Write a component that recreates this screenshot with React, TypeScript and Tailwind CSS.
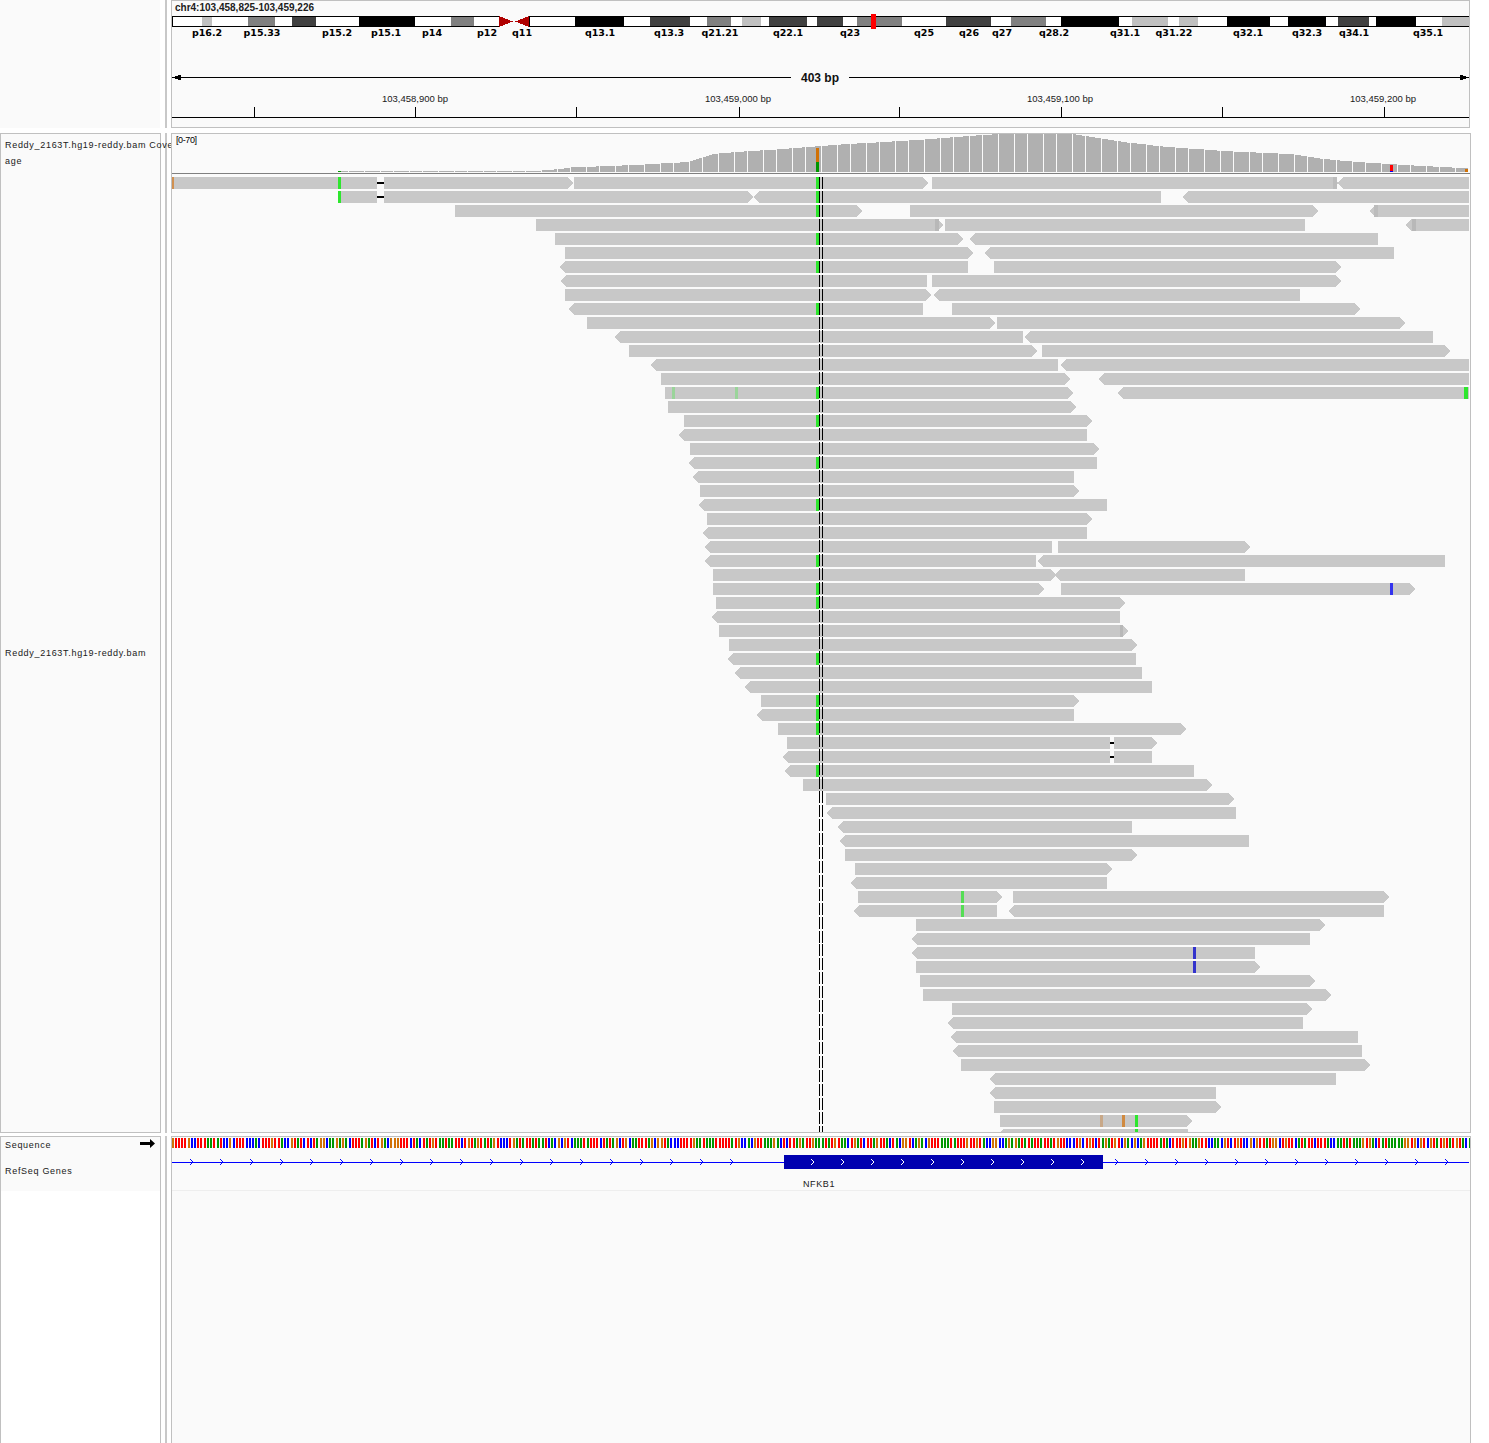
import React from 'react';

type Dir = 'r' | 'l' | 'n';
type Read = [number, number, Dir];

const GREEN = '#2ee62e';
const SCALE = 1297 / 403;

const bands: [number, number, string][] = [
  [172, 202, '#fff'], [202, 212, '#c0c0c0'], [212, 248, '#fff'], [248, 275, '#808080'], [275, 292, '#fff'],
  [292, 316, '#404040'], [316, 359, '#fff'], [359, 415, '#000'], [415, 451, '#fff'], [451, 474, '#808080'],
  [474, 499, '#fff'], [529, 575, '#fff'], [575, 624, '#000'], [624, 650, '#fff'], [650, 690, '#404040'],
  [690, 707, '#fff'], [707, 731, '#808080'], [731, 742, '#fff'], [742, 761, '#c0c0c0'], [761, 769, '#fff'],
  [769, 807, '#404040'], [807, 817, '#fff'], [817, 843, '#404040'], [843, 857, '#fff'], [857, 902, '#808080'],
  [902, 946, '#fff'], [946, 991, '#404040'], [991, 1011, '#fff'], [1011, 1046, '#808080'], [1046, 1061, '#fff'],
  [1061, 1119, '#000'], [1119, 1132, '#fff'], [1132, 1168, '#c0c0c0'], [1168, 1179, '#fff'], [1179, 1198, '#c0c0c0'],
  [1198, 1227, '#fff'], [1227, 1270, '#000'], [1270, 1288, '#fff'], [1288, 1326, '#000'], [1326, 1338, '#fff'],
  [1338, 1369, '#404040'], [1369, 1376, '#fff'], [1376, 1416, '#000'], [1416, 1442, '#fff'], [1442, 1469, '#c0c0c0'],
];

const cytoLabels: [string, number][] = [
  ['p16.2', 207], ['p15.33', 262], ['p15.2', 337], ['p15.1', 386], ['p14', 432], ['p12', 487], ['q11', 522],
  ['q13.1', 600], ['q13.3', 669], ['q21.21', 720], ['q22.1', 788], ['q23', 850], ['q25', 924], ['q26', 969],
  ['q27', 1002], ['q28.2', 1054], ['q31.1', 1125], ['q31.22', 1174], ['q32.1', 1248], ['q32.3', 1307],
  ['q34.1', 1354], ['q35.1', 1428],
];

const rulerLabels: [string, number][] = [
  ['103,458,900 bp', 415], ['103,459,000 bp', 738], ['103,459,100 bp', 1060], ['103,459,200 bp', 1383],
];
const ticks = [254, 415, 576, 739, 899, 1061, 1222, 1384];

// one entry per row of the pileup, top to bottom
const rows: Read[][] = [
  [[172, 377, 'n'], [384, 573, 'r'], [574, 928, 'r'], [932, 1338, 'r'], [1338, 1469, 'l']],
  [[338, 377, 'n'], [384, 753, 'r'], [754, 1161, 'l'], [1183, 1469, 'l']],
  [[455, 862, 'r'], [910, 1318, 'r'], [1370, 1469, 'l']],
  [[536, 943, 'r'], [945, 1305, 'n'], [1406, 1469, 'l']],
  [[555, 963, 'r'], [970, 1378, 'l']],
  [[565, 973, 'r'], [985, 1394, 'l']],
  [[560, 968, 'l'], [994, 1341, 'r']],
  [[561, 927, 'l'], [932, 1341, 'r']],
  [[565, 931, 'r'], [934, 1300, 'l']],
  [[569, 923, 'l'], [952, 1360, 'r']],
  [[587, 995, 'r'], [997, 1405, 'r']],
  [[615, 1023, 'l'], [1025, 1433, 'l']],
  [[629, 1037, 'r'], [1042, 1450, 'r']],
  [[651, 1058, 'l'], [1061, 1469, 'l']],
  [[661, 1070, 'r'], [1099, 1469, 'l']],
  [[665, 1073, 'r'], [1118, 1469, 'l']],
  [[668, 1076, 'r']],
  [[684, 1092, 'r']],
  [[679, 1087, 'l']],
  [[690, 1099, 'r']],
  [[689, 1097, 'l']],
  [[693, 1074, 'l']],
  [[700, 1079, 'r']],
  [[699, 1107, 'l']],
  [[707, 1092, 'r']],
  [[703, 1087, 'l']],
  [[705, 1052, 'l'], [1058, 1250, 'r']],
  [[705, 1036, 'l'], [1038, 1445, 'l']],
  [[713, 1056, 'r'], [1055, 1245, 'l']],
  [[713, 1044, 'r'], [1061, 1415, 'r']],
  [[716, 1125, 'r']],
  [[712, 1120, 'l']],
  [[719, 1128, 'r']],
  [[729, 1137, 'r']],
  [[728, 1136, 'l']],
  [[735, 1142, 'l']],
  [[745, 1152, 'l']],
  [[761, 1079, 'r']],
  [[757, 1074, 'l']],
  [[778, 1186, 'r']],
  [[787, 1110, 'n'], [1114, 1157, 'r']],
  [[783, 1110, 'l'], [1114, 1152, 'n']],
  [[785, 1194, 'l']],
  [[803, 1212, 'r']],
  [[826, 1234, 'r']],
  [[827, 1236, 'l']],
  [[838, 1132, 'l']],
  [[840, 1249, 'l']],
  [[845, 1137, 'r']],
  [[855, 1112, 'r']],
  [[851, 1107, 'l']],
  [[858, 1002, 'r'], [1013, 1389, 'r']],
  [[854, 997, 'l'], [1009, 1384, 'l']],
  [[916, 1325, 'r']],
  [[912, 1310, 'l']],
  [[912, 1255, 'l']],
  [[916, 1260, 'r']],
  [[920, 1315, 'r']],
  [[923, 1331, 'r']],
  [[952, 1312, 'r']],
  [[948, 1303, 'l']],
  [[951, 1358, 'l']],
  [[953, 1362, 'l']],
  [[961, 1370, 'r']],
  [[990, 1336, 'l']],
  [[990, 1216, 'l']],
  [[994, 1221, 'r']],
  [[1000, 1192, 'r']],
  [[998, 1188, 'l']],
];

const greenRows = [0, 1, 2, 4, 6, 9, 15, 17, 20, 23, 27, 29, 30, 34, 37, 38, 39, 42];

// row, x, width, colour
const marks: [number, number, number, string][] = [
  [0, 172, 2, '#d09050'],
  [0, 338, 3, GREEN],
  [1, 338, 3, GREEN],
  [0, 1333, 4, '#bcbcbc'],
  [2, 1374, 4, '#bcbcbc'],
  [3, 935, 4, '#b8b8b8'],
  [3, 1412, 4, '#b8b8b8'],
  [15, 672, 3, '#9ad49a'],
  [15, 735, 3, '#9ad49a'],
  [15, 1464, 4, GREEN],
  [29, 1390, 3, '#3333ee'],
  [32, 1120, 3, '#b8b8b8'],
  [51, 961, 3, '#55dd55'],
  [52, 961, 3, '#55dd55'],
  [55, 1193, 3, '#3333cc'],
  [56, 1193, 3, '#3333cc'],
  [67, 1100, 3, '#c8a888'],
  [67, 1122, 3, '#d08a40'],
  [67, 1135, 3, GREEN],
  [68, 1135, 3, GREEN],
];

const profile: [number, number][] = [
  [338, 171.4], [535, 171], [560, 169], [567, 167.5], [633, 165], [687, 162], [700, 158], [713, 154], [733, 152],
  [767, 150], [800, 147.5], [847, 144], [917, 140], [967, 136], [1000, 134], [1072, 133.5], [1078, 135], [1089, 137],
  [1122, 142], [1156, 146], [1222, 151], [1289, 154], [1322, 159], [1356, 162], [1422, 166], [1470, 168.5],
];

function coverageTop(x: number) {
  for (let i = 1; i < profile.length; i++) {
    const [x0, y0] = profile[i - 1];
    const [x1, y1] = profile[i];
    if (x <= x1) return y0 + ((x - x0) / (x1 - x0)) * (y1 - y0);
  }
  return 168;
}

const basePx = (i: number) => 172 + Math.floor(i * SCALE);

const baseColors = ['#009600', '#0000ff', '#d17105', '#ff0000'];
const bases: string[] = [];
let seed = 20231;
for (let i = 0; i < 404; i++) {
  seed = (seed * 1103515245 + 12345) % 2147483648;
  const r = (seed >> 12) % 100;
  bases.push(r < 29 ? baseColors[0] : r < 47 ? baseColors[1] : r < 66 ? baseColors[2] : baseColors[3]);
}

const step = (from: number, to: number) => {
  const out: number[] = [];
  for (let x = from; x <= to; x += 30) out.push(x);
  return out;
};

function readPoints([x1, x2, dir]: Read, y: number) {
  const b = y + 12;
  const m = y + 6;
  if (dir === 'r') return `${x1},${y} ${x2 - 5},${y} ${x2},${m} ${x2 - 5},${b} ${x1},${b}`;
  if (dir === 'l') return `${x1 + 5},${y} ${x2},${y} ${x2},${b} ${x1 + 5},${b} ${x1},${m}`;
  return `${x1},${y} ${x2},${y} ${x2},${b} ${x1},${b}`;
}

const rowY = (i: number) => 177 + 14 * i;

function HeaderTrack() {
  const label = { fontFamily: '"DejaVu Sans", sans-serif', fontSize: 9.5, fontWeight: 700 };
  return (
    <svg width={1298} height={126} viewBox="172 1 1298 126" className="block" shapeRendering="crispEdges">
      <text x={175} y={11} fontFamily='"Liberation Sans", sans-serif' fontSize={10} fontWeight={700} fill="#202020">
        chr4:103,458,825-103,459,226
      </text>
      {bands.map(([a, b, c]) => (
        <rect key={a} x={a} y={16} width={b - a} height={11} fill={c} />
      ))}
      <rect x={172} y={16} width={327} height={1} fill="#000" />
      <rect x={172} y={26} width={327} height={1} fill="#000" />
      <rect x={529} y={16} width={940} height={1} fill="#000" />
      <rect x={529} y={26} width={940} height={1} fill="#000" />
      <rect x={172} y={16} width={1} height={11} fill="#000" />
      <rect x={529} y={16} width={1} height={11} fill="#000" />
      <polygon points="499,16 513,21.5 499,27" fill="#b00000" />
      <polygon points="529,16 515,21.5 529,27" fill="#b00000" />
      <rect x={871} y={14} width={5} height={15} fill="#ff0000" />
      {cytoLabels.map(([t, x]) => (
        <text key={t} x={x} y={36} textAnchor="middle" fill="#000" style={label} shapeRendering="auto">
          {t}
        </text>
      ))}
      <rect x={172} y={77} width={619} height={1} fill="#000" />
      <rect x={849} y={77} width={620} height={1} fill="#000" />
      <polygon points="172,77.5 181,74.5 181,80.5" fill="#000" />
      <polygon points="1469,77.5 1460,74.5 1460,80.5" fill="#000" />
      <text x={820} y={82} textAnchor="middle" fontFamily='"Liberation Sans", sans-serif' fontSize={12} fontWeight={700} fill="#101010">
        403 bp
      </text>
      {rulerLabels.map(([t, x]) => (
        <text key={t} x={x} y={102} textAnchor="middle" fontFamily='"Liberation Sans", sans-serif' fontSize={9.5} fill="#202020">
          {t}
        </text>
      ))}
      {ticks.map((x) => (
        <rect key={x} x={x} y={107} width={1} height={10} fill="#000" />
      ))}
      <rect x={172} y={117} width={1297} height={1} fill="#000" />
    </svg>
  );
}

function Pileup() {
  const bars = [];
  for (let i = 0; i < 403; i++) {
    const x = basePx(i);
    if (x < 338 || x > 1467) continue;
    const top = Math.round(coverageTop(x));
    bars.push(<rect key={i} x={x} y={top} width={3} height={172 - top} fill="#b0b0b0" />);
  }
  return (
    <svg width={1298} height={998} viewBox="172 134 1298 998" className="block" shapeRendering="crispEdges">
      {bars}
      <rect x={816} y={148} width={3} height={14} fill="#d17105" />
      <rect x={816} y={162} width={3} height={10} fill="#009600" />
      <rect x={338} y={171} width={3} height={1} fill="#009600" />
      <rect x={1390} y={165} width={3} height={6} fill="#ff0000" />
      <rect x={1390} y={171} width={3} height={1} fill="#0000ff" />
      <rect x={1465} y={169} width={3} height={3} fill="#d17105" />
      <rect x={172} y={173} width={1298} height={1} fill="#808080" />
      <text x={176} y={143} fontFamily='"Liberation Sans", sans-serif' fontSize={9} letterSpacing={-0.4} fill="#000" shapeRendering="auto">
        [0-70]
      </text>
      {rows.map((reads, i) =>
        reads.map((r) => <polygon key={`${i}-${r[0]}`} points={readPoints(r, rowY(i))} fill="#c8c8c8" />),
      )}
      <rect x={377} y={182} width={7} height={2} fill="#000" />
      <rect x={377} y={196} width={7} height={2} fill="#000" />
      <rect x={1110} y={742} width={4} height={2} fill="#000" />
      <rect x={1110} y={756} width={4} height={2} fill="#000" />
      {greenRows.map((i) => (
        <rect key={i} x={816} y={rowY(i)} width={3} height={12} fill={GREEN} />
      ))}
      {marks.map(([i, x, w, c]) => (
        <rect key={`${i}-${x}`} x={x} y={rowY(i)} width={w} height={12} fill={c} />
      ))}
      <line x1={819.5} y1={177} x2={819.5} y2={1132} stroke="#000" strokeWidth={1} strokeDasharray="12 1.954" />
      <line x1={822.5} y1={177} x2={822.5} y2={1132} stroke="#000" strokeWidth={1} strokeDasharray="12 1.954" />
    </svg>
  );
}

function Chevron({ x, color }: { x: number; color: string }) {
  return <polyline points={`${x - 2},1159 ${x + 1},1162 ${x - 2},1165`} fill="none" stroke={color} strokeWidth={1} />;
}

function SequenceAndGenes() {
  return (
    <svg width={1298} height={54} viewBox="172 1137 1298 54" className="block" shapeRendering="crispEdges">
      {bases.map((c, i) => (
        <rect key={i} x={basePx(i)} y={1138} width={2} height={10} fill={c} />
      ))}
      <rect x={172} y={1162} width={1297} height={1} fill="#0000ff" />
      {step(192, 733).map((x) => (
        <Chevron key={x} x={x} color="#0000ff" />
      ))}
      {step(1117, 1447).map((x) => (
        <Chevron key={x} x={x} color="#0000ff" />
      ))}
      <rect x={784} y={1155} width={319} height={14} fill="#0000b0" />
      {step(813, 1083).map((x) => (
        <Chevron key={x} x={x} color="#ffffff" />
      ))}
      <text x={819} y={1187} textAnchor="middle" fontFamily='"Liberation Sans", sans-serif' fontSize={9} letterSpacing={0.6} fill="#202020">
        NFKB1
      </text>
      <rect x={172} y={1190} width={1298} height={1} fill="#eeeeee" />
    </svg>
  );
}

const labelClass = "font-['Liberation_Sans',sans-serif] text-[9px] leading-[11px] tracking-[0.7px] text-[#202020] whitespace-nowrap";

export default function App() {
  return (
    <div className="flex flex-col w-[1489px] h-[1443px] overflow-hidden bg-white">
      <div className="flex h-[128px] mb-[5px]">
        <div className="w-[160px] bg-[#fafafa]" />
        <div className="w-[2px] ml-[5px] mr-[4px] bg-[#c8c8c8]" />
        <div className="w-[1299px] bg-[#fafafa] border border-[#c0c0c0] border-l-[#c0c0c0]">
          <HeaderTrack />
        </div>
      </div>

      <div className="flex h-[1000px] mb-[3px]">
        <div className="relative w-[161px] bg-[#fafafa] border border-[#c0c0c0] overflow-visible">
          <div className={`${labelClass} mt-[6px] ml-[4px] mb-[5px] w-[166px] overflow-hidden`}>Reddy_2163T.hg19-reddy.bam Coverage</div>
          <div className={`${labelClass} ml-[4px]`}>age</div>
          <div className={`${labelClass} mt-[481px] ml-[4px]`}>Reddy_2163T.hg19-reddy.bam</div>
        </div>
        <div className="w-[2px] ml-[4px] mr-[4px] bg-[#c8c8c8]" />
        <div className="w-[1300px] bg-[#fafafa] border border-[#c0c0c0]">
          <Pileup />
        </div>
      </div>

      <div className="flex flex-1">
        <div className="w-[161px] border border-b-0 border-[#c0c0c0]">
          <div className="h-[54px] bg-[#fafafa] pl-[4px] relative">
            <div className={`${labelClass} pt-[3px]`}>Sequence</div>
            <div className={`${labelClass} mt-[15px]`}>RefSeq Genes</div>
            <svg width={16} height={9} viewBox="0 0 16 9" className="absolute left-[139px] top-[2px]">
              <polygon points="0,3 10,3 10,0 15,4.5 10,9 10,6 0,6" fill="#000" />
            </svg>
          </div>
        </div>
        <div className="w-[2px] ml-[4px] mr-[4px] bg-[#c8c8c8]" />
        <div className="w-[1300px] bg-[#fafafa] border border-b-0 border-[#c0c0c0]">
          <SequenceAndGenes />
        </div>
      </div>
    </div>
  );
}
